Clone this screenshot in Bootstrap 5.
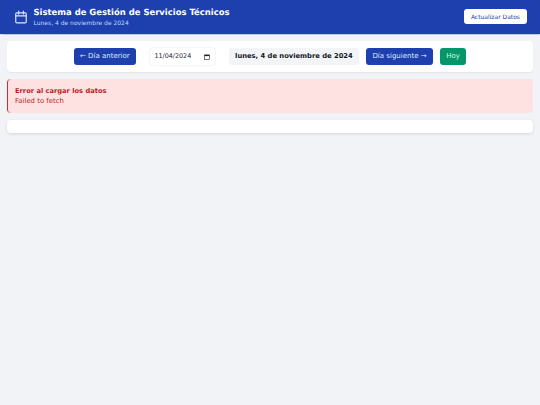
<!DOCTYPE html>
<html lang="es">
<head>
<meta charset="utf-8">
<title>Sistema de Gestión de Servicios Técnicos</title>
<link href="https://cdn.jsdelivr.net/npm/bootstrap@5.3.0/dist/css/bootstrap.min.css" rel="stylesheet">
<style>
html, body { height: 100%; }
body { background: #f1f3f7; font-family: "DejaVu Sans", sans-serif; color: #1f2937; overflow: hidden; text-rendering: geometricPrecision; }
.app-head { background: #1e40af; height: 33.5px; padding: 0 13.5px; box-shadow: 0 .5px 1px rgba(30,64,175,.25); }
.head-brand { gap: 6px; }
.app-title { font-size: 8.45px; line-height: 12px; font-weight: 700; color: #fff; margin: 0; }
.app-sub { font-size: 6px; line-height: 8px; color: #bfdbfe; margin-top: 1.5px; }
.btn-refresh { background: #fff; color: #1e40af; font-size: 6px; line-height: 8px; font-weight: 500; border: 0; border-radius: 3px; padding: 3.5px 6.5px; height: 15.5px; margin-top: -.5px; }
.app-main { padding: 7.5px 7px 7px; }
.nav-panel { background: #fff; border-radius: 4px; height: 31px; box-shadow: 0 1px 2px rgba(0,0,0,.06); gap: 6.7px; margin-bottom: 7px; }
.act-btn { font-size: 7px; line-height: 9px; color: #dbeafe; border: 0; border-radius: 3px; padding: 4px 6.5px; height: 17px; background: #1e40af; white-space: nowrap; }
.act-btn.act-green { background: #059669; color: #d1fae5; }
.date-box { width: 65px; height: 17px; background: #fff; border-radius: 3px; box-shadow: 0 0 1.5px rgba(0,0,0,.2); font-size: 6.4px; line-height: 9px; color: #1f2937; padding: 0 4.5px 0 4.5px; margin: 0 7px; }
.date-now { background: #f3f4f6; border-radius: 3px; height: 17px; padding: 0 6.5px; font-size: 6.75px; font-weight: 700; color: #111827; white-space: nowrap; }
.err-box { background: #fee2e2; border-left: 1.5px solid #dc2626; border-radius: 4px; height: 33.5px; padding: 7px 7px 0 7px; margin-bottom: 7px; }
.err-title { font-size: 6.7px; line-height: 10px; font-weight: 700; color: #b91c1c; }
.err-text { font-size: 6.9px; line-height: 10px; color: #b91c1c; }
.blank-panel { background: #fff; border-radius: 4px; height: 13.5px; box-shadow: 0 1px 3px rgba(0,0,0,.12); }
</style>
</head>
<body>
<header class="app-head d-flex align-items-center justify-content-between">
  <div class="head-brand d-flex align-items-center">
    <svg width="14" height="14" viewBox="0 0 24 24" fill="none" stroke="#dbeafe" stroke-width="2" stroke-linecap="round" stroke-linejoin="round" aria-hidden="true"><rect x="3" y="5" width="18" height="17" rx="2"/><path d="M8 2v5M16 2v5M3 10h18"/></svg>
    <div>
      <h1 class="app-title">Sistema de Gestión de Servicios Técnicos</h1>
      <div class="app-sub">Lunes, 4 de noviembre de 2024</div>
    </div>
  </div>
  <button class="btn-refresh" type="button">Actualizar Datos</button>
</header>
<main class="app-main">
  <section class="nav-panel d-flex align-items-center justify-content-center">
    <button class="act-btn" type="button">← Día anterior</button>
    <div class="date-box d-flex align-items-center justify-content-between">
      <span>11/04/2024</span>
      <svg width="6" height="6" viewBox="0 0 10 10" fill="none" aria-hidden="true"><rect x="1" y="1.5" width="8" height="7.5" fill="none" stroke="#222" stroke-width="1"/><rect x="1" y="1.5" width="8" height="2" fill="#222"/></svg>
    </div>
    <div class="date-now d-flex align-items-center">lunes, 4 de noviembre de 2024</div>
    <button class="act-btn" type="button">Día siguiente →</button>
    <button class="act-btn act-green" type="button">Hoy</button>
  </section>
  <section class="err-box">
    <div class="err-title">Error al cargar los datos</div>
    <div class="err-text">Failed to fetch</div>
  </section>
  <section class="blank-panel"></section>
</main>
<script src="https://cdn.jsdelivr.net/npm/bootstrap@5.3.0/dist/js/bootstrap.bundle.min.js"></script>
</body>
</html>
